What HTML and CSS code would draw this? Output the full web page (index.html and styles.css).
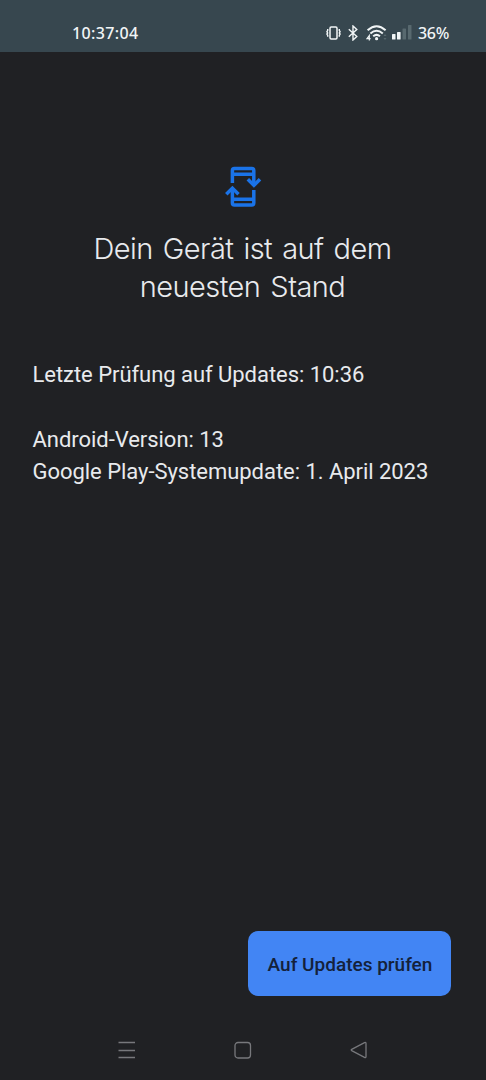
FILE: index.html
```html
<!DOCTYPE html>
<html lang="de">
<head>
    <meta charset="UTF-8">
    <meta name="viewport" content="width=device-width, initial-scale=1.0">
    <title>Systemupdate</title>
    <link rel="stylesheet" href="styles.css">
</head>
<body>

    <!-- Status Bar -->
    <header class="status-bar">
        <span class="clock">10:37:04</span>
        <div class="status-icons">
            <svg class="vibrate" width="15" height="14" viewBox="0 0 15 14" fill="none" stroke="currentColor">
                <rect x="4" y="1" width="7" height="12" rx="1.2" stroke-width="1.5"/>
                <path d="M1.7 3v1.5l-.8 1.2.8 1.2-.8 1.2.8 1.2v1.5M13.3 3v1.5l.8 1.2-.8 1.2.8 1.2-.8 1.2v1.5" stroke-width="1.4"/>
            </svg>
            <svg class="bluetooth" width="10" height="16" viewBox="0 0 10 16" fill="none" stroke="currentColor" stroke-width="1.4">
                <path d="M.8 4.2l8 7.4L5 15V1l3.8 3.4-8 7.4"/>
            </svg>
            <svg class="wifi" width="22" height="16" viewBox="0 0 22 16" fill="none" stroke="currentColor" stroke-width="2">
                <path d="M1.6 5.2q9-8 18 0M4.4 8.4q6.2-5.3 12.4 0M7.2 11.3q3.4-2.8 6.8 0"/>
                <circle cx="10.6" cy="13.7" r="1.6" fill="currentColor" stroke="none"/>
                <path d="M3.3 15.5v-5L1 13.7h3.6" stroke-width="1.2"/>
                <path class="faint" d="M17.5 11l1.5-2 1.5 2zM17.5 13l1.5 2 1.5-2z" stroke="none"/>
            </svg>
            <svg class="signal" width="20" height="15" viewBox="0 0 20 15" fill="currentColor">
                <rect x="0" y="9" width="3.5" height="5.5" rx=".6"/>
                <rect x="5" y="7" width="3.6" height="7.5" rx=".6"/>
                <rect class="faint" x="10.5" y="3.5" width="3.5" height="11" rx=".6"/>
                <rect class="faint" x="16" y="0" width="3.5" height="14.5" rx=".6"/>
            </svg>
            <span class="battery">36%</span>
        </div>
    </header>

    <main class="content">
        <svg class="update-icon" width="40" height="44" viewBox="0 0 40 44" fill="none" stroke="currentColor" stroke-width="3.5">
            <path d="M9.4 18V5.5q0-2 2-2h17.4q2 0 2 2V20M9.4 9.2h21.4"/>
            <path d="M24.8 14.2l6.1 6.1 6.1-6.1"/>
            <path d="M30.8 25v13q0 2-2 2H11.4q-2 0-2-2V24M9.4 34.3h21.4"/>
            <path d="M3.3 29.2l6.1-6.1 6.1 6.1"/>
        </svg>

        <h1 class="title">Dein Gerät ist auf dem<br>neuesten Stand</h1>

        <div class="details">
            <p class="last-check">Letzte Prüfung auf Updates: 10:36</p>
            <p class="version">Android-Version: 13</p>
            <p class="play-update">Google Play-Systemupdate: 1. April 2023</p>
        </div>

        <button class="check-btn">Auf Updates prüfen</button>
    </main>

    <!-- Navigation Bar -->
    <nav class="nav-bar">
        <svg width="18" height="18" viewBox="0 0 18 18">
            <path d="M.5 1.5h16.5M.5 9.5h16.5M.5 16.5h16.5"/>
        </svg>
        <svg width="18" height="18" viewBox="0 0 18 18">
            <rect x="1" y="1.5" width="15.5" height="15.5" rx="3"/>
        </svg>
        <svg width="18" height="18" viewBox="0 0 18 18">
            <path d="M1.7 8.4L14.5 1.6q1.5-.6 1.5 1v12.8q0 1.6-1.5 1L1.7 9.6q-1-.6 0-1.2z"/>
        </svg>
    </nav>

</body>
</html>
```

FILE: styles.css
```css
* {
    box-sizing: border-box;
}
body {
    display: flex;
    flex-direction: column;
    height: 1080px;
    margin: 0;
    background-color: #202124;
    color: #e8eaed;
    font-family: Roboto, sans-serif;
}

/* Status Bar */
.status-bar {
    display: flex;
    justify-content: space-between;
    align-items: center;
    height: 52px;
    padding: 13px 37px 0 72px;
    background-color: #37474f;
    color: #f1f5f6;
    font-family: "Noto Sans", sans-serif;
    font-size: 16px;
    font-weight: 500;
    line-height: 24px;
}
.clock {
    letter-spacing: 0.35px;
}
.status-icons {
    display: flex;
    align-items: center;
}
.bluetooth {
    margin-left: 7px;
}
.wifi {
    margin-left: 8px;
}
.signal {
    margin-left: 4px;
}
.battery {
    margin-left: 6px;
    letter-spacing: -0.3px;
}
.faint {
    fill: #58696f;
}

/* Main Content */
.content {
    display: flex;
    flex: 1;
    flex-direction: column;
    align-items: center;
    padding: 113px 35px 24px 33px;
}
.update-icon {
    margin-left: 1px;
    color: #1a73e8;
}
.title {
    margin: 21px 0 0 1px;
    font-family: Inter, sans-serif;
    font-size: 29px;
    font-weight: 350;
    letter-spacing: -0.55px;
    word-spacing: 2.4px;
    line-height: 38px;
    text-align: center;
    white-space: nowrap;
}
.details {
    align-self: stretch;
    margin-top: 53px;
    margin-left: -0.5px;
    font-size: 22px;
    letter-spacing: -0.04px;
    line-height: 32.5px;
    white-space: nowrap;
}
.details p {
    margin: 0;
}
.details .last-check {
    margin-bottom: 32px;
}

/* Update Button */
.check-btn {
    align-self: flex-end;
    width: 203px;
    height: 65px;
    margin-top: auto;
    padding: 2px 0 0 1px;
    border: none;
    border-radius: 10px;
    background-color: #4285f4;
    color: #14213a;
    font-family: Roboto, sans-serif;
    font-size: 19px;
    font-weight: 500;
    cursor: pointer;
}

/* Navigation Bar */
.nav-bar {
    display: flex;
    justify-content: space-between;
    align-items: center;
    height: 60px;
    padding: 0 118px;
}
.nav-bar svg {
    fill: none;
    stroke: #77787c;
    stroke-width: 1.3;
}
```
